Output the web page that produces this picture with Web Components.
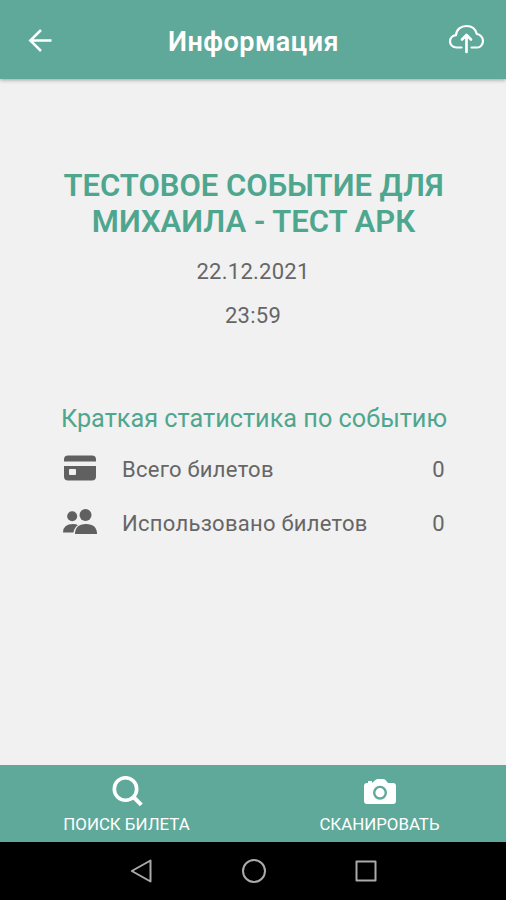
<!DOCTYPE html>
<html lang="ru">
<head>
<meta charset="utf-8">
<title>Информация</title>
<style>
html,body{margin:0;height:100%}
body{font-family:Roboto,"Noto Sans",sans-serif;overflow:hidden}
</style>
</head>
<body>
<event-screen></event-screen>
<script>
const define=(name,html)=>customElements.define(name,class extends HTMLElement{
  constructor(){
    super();
    const t=document.createElement('template');
    t.innerHTML=html;
    this.attachShadow({mode:'open'}).append(t.content.cloneNode(true));
  }
});

define('app-header',`<style>
:host{display:grid;grid-template-columns:80px 1fr 80px;align-items:center;height:79px;background:#5fa99a;color:#fff;box-shadow:0 1px 4px rgba(0,0,0,.35);z-index:1}
h1{margin:0;padding:5px 0 0 1px;text-align:center;font-size:27px;line-height:32px;font-weight:600;white-space:nowrap;letter-spacing:.5px}
svg{display:block}
.back{margin-left:27px}
.cloud{margin-left:22px;margin-bottom:2px}
</style>
<svg class="back" width="26" height="26" viewBox="0 0 26 26" fill="none" stroke="#fff" stroke-width="2.5"><path d="M24.500 13.500H3M14 3L3.300 13.500 14 24"/></svg>
<h1><slot></slot></h1>
<svg class="cloud" width="38" height="32" viewBox="0 0 38 32" fill="none" stroke="#fff" stroke-width="2.200" stroke-linecap="round" stroke-linejoin="round"><path d="M13.500 24.500H8.500C4.700 24.500 2 21.800 2 18.400C2 15.200 4.300 12.500 8 12.100C8.500 6.500 12.800 3 18.500 3C23.700 3 27.600 6 28.800 11C32 11.300 35 14.200 35 17.900C35 21.700 32.200 24.500 29.500 24.500H23.500"/><path stroke-width="2.700" d="M18.500 29V12.500M14 16.500L18.500 12L23 16.500"/></svg>`);

define('event-summary',`<style>
:host{display:flex;flex-direction:column;align-items:center;text-align:center;color:#666}
h2{margin:0;padding-left:1px;font-size:31px;line-height:36px;font-weight:600;color:#4fa68f;white-space:nowrap}
.date,.time{font-size:22px;line-height:26px;letter-spacing:.25px}
.date{margin-top:19px}.time{margin-top:18px}
</style>
<h2><slot name="title"></slot></h2>
<div class="date"><slot name="date"></slot></div>
<div class="time"><slot name="time"></slot></div>`);

define('stat-row',`<style>
:host{display:grid;grid-template-columns:61px 1fr auto;align-items:center;height:54px;font-size:22px;line-height:26px;color:#666;letter-spacing:.28px;white-space:nowrap}
::slotted(svg){display:block;margin-bottom:4px}
</style>
<slot name="icon"></slot><span><slot></slot></span><span><slot name="value"></slot></span>`);

define('event-stats',`<style>
:host{display:block;width:384px}
h3{margin:0 0 8px;font-size:25.250px;line-height:32px;font-weight:400;color:#4fa68f;white-space:nowrap}
</style><h3><slot name="heading"></slot></h3><slot></slot>`);

define('tab-button',`<style>
:host{display:flex;flex-direction:column;align-items:center;color:#fff;font-size:16.850px;line-height:20px;padding-top:9px;white-space:nowrap}
::slotted(svg){display:block;margin-bottom:6px}
</style><slot name="icon"></slot><span><slot></slot></span>`);

define('tab-bar',`<style>
:host{display:grid;grid-template-columns:1fr 1fr;height:77px;background:#5fa99a}
</style><slot></slot>`);

define('system-nav',`<style>
:host{display:flex;height:58px;background:#000;justify-content:center;align-items:center;gap:86px;padding-left:2px;box-sizing:border-box}
svg{display:block}
</style>
<svg width="26" height="26" viewBox="0 0 26 26" fill="none" stroke="#aaa" stroke-width="2" stroke-linejoin="round"><path d="M21.500 2.500V23.500L2.800 13Z"/></svg>
<svg width="26" height="26" viewBox="0 0 26 26" fill="none" stroke="#aaa" stroke-width="2"><circle cx="13" cy="13" r="11"/></svg>
<svg width="26" height="26" viewBox="0 0 26 26" fill="none" stroke="#aaa" stroke-width="2" stroke-linejoin="round"><rect x="3.500" y="3.500" width="19" height="19"/></svg>`);

define('event-screen',`<style>
:host{display:flex;flex-direction:column;width:506px;height:900px;background:#f1f1f1}
main{flex:1;display:flex;flex-direction:column;align-items:center;padding-top:89px}
event-stats{margin-top:74px}
</style>
<app-header>Информация</app-header>
<main>
<event-summary><span slot="title">ТЕСТОВОЕ СОБЫТИЕ ДЛЯ<br>МИХАИЛА - ТЕСТ АРК</span><span slot="date">22.12.2021</span><span slot="time">23:59</span></event-summary>
<event-stats><span slot="heading">Краткая статистика по событию</span>
<stat-row><svg slot="icon" width="38" height="32" viewBox="0 0 38 32" fill="#606060"><path d="M3 9.500V7.500Q3 3.500 7 3.500H31Q35 3.500 35 7.500V9.500Z"/><path fill-rule="evenodd" d="M3 14H35V24.500Q35 28.500 31 28.500H7Q3 28.500 3 24.500ZM9 17Q8 17 8 18V22Q8 23 9 23H14Q15 23 15 22V18Q15 17 14 17Z"/></svg>Всего билетов<span slot="value">0</span></stat-row>
<stat-row><svg slot="icon" width="38" height="32" viewBox="0 0 38 32" fill="#606060"><circle cx="11.200" cy="10.300" r="5"/><circle cx="24.500" cy="9" r="6"/><path d="M2 26.500Q2 18 12 18Q15 18 17 19Q13 22 12.500 26.500Z"/><path d="M14 28Q14 18 25 18Q36 18 36 28Z"/></svg>Использовано билетов<span slot="value">0</span></stat-row>
</event-stats>
</main>
<tab-bar>
<tab-button><svg slot="icon" width="34" height="34" viewBox="0 0 34 34" fill="none" stroke="#fff"><circle cx="15.500" cy="15" r="11.200" stroke-width="3.600"/><path d="M23 22.500L31.300 30.800" stroke-width="4"/></svg>ПОИСК БИЛЕТА</tab-button>
<tab-button><svg slot="icon" width="34" height="34" viewBox="0 0 34 34"><path fill="#fff" d="M4 9H5V7H9V9L12.500 6Q13.500 5 15 5H20Q21.500 5 22.500 6L25 9H30Q33 9 33 12V27Q33 30 30 30H4Q1 30 1 27V12Q1 9 4 9Z"/><circle cx="17" cy="18.700" r="5.800" fill="none" stroke="#5fa99a" stroke-width="2.400"/></svg>СКАНИРОВАТЬ</tab-button>
</tab-bar>
<system-nav></system-nav>`);
</script>
</body>
</html>
